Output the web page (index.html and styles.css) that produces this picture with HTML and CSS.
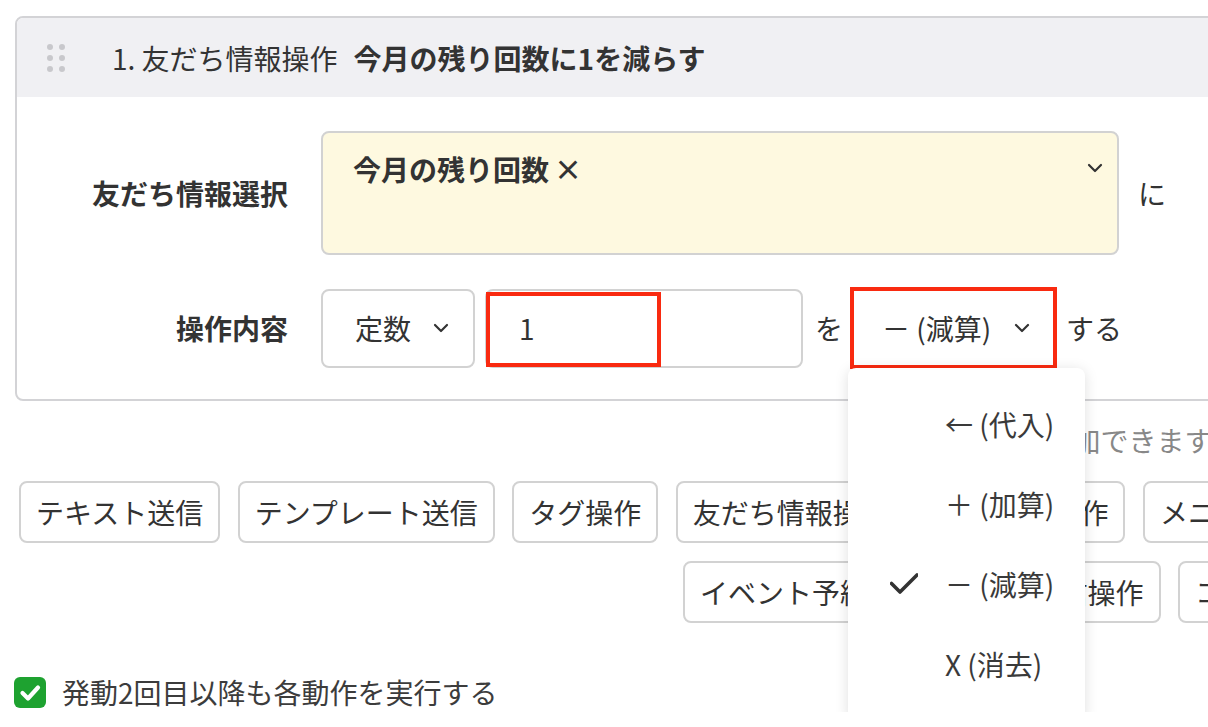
FILE: index.html
```html
<!DOCTYPE html>
<html lang="ja">
<head>
  <meta charset="UTF-8" />
  <title>アクション設定</title>
  <link rel="stylesheet" href="styles.css">
</head>
<body>
  <div class="page">
    <!-- Action card -->
    <section class="action-card">
      <div class="card-head">
        <span class="drag-handle"><i></i><i></i><i></i><i></i><i></i><i></i></span>
        <span class="head-index">1. 友だち情報操作</span>
        <span class="head-title">今月の残り回数に1を減らす</span>
      </div>

      <div class="card-body">
        <div class="form-row">
          <div class="form-label">友だち情報選択</div>
          <div class="tag-select">
            <span class="tag">今月の残り回数<span class="tag-remove">×</span></span>
            <svg class="chevron chevron-tag" width="16" height="10" viewBox="0 0 16 10"><path d="M2 2 L8 8 L14 2" /></svg>
          </div>
          <span class="suffix suffix-ni">に</span>
        </div>

        <div class="form-row">
          <div class="form-label">操作内容</div>
          <div class="select select-type">
            <span>定数</span>
            <svg class="chevron" width="16" height="10" viewBox="0 0 16 10"><path d="M2 2 L8 8 L14 2" /></svg>
          </div>
          <div class="value-input">
            <span>1</span>
            <span class="mark"></span>
          </div>
          <span class="suffix suffix-wo">を</span>
          <div class="select select-op">
            <span>－ (減算)</span>
            <svg class="chevron" width="16" height="10" viewBox="0 0 16 10"><path d="M2 2 L8 8 L14 2" /></svg>

            <!-- open menu -->
            <ul class="op-menu">
              <li><span class="op-check"></span>← (代入)</li>
              <li><span class="op-check"></span>＋ (加算)</li>
              <li class="selected">
                <span class="op-check">
                  <svg width="28" height="22" viewBox="0 0 28 22"><path d="M1.5 10.5 L10 19 L27 2" /></svg>
                </span>－ (減算)
              </li>
              <li><span class="op-check"></span>X (消去)</li>
            </ul>
          </div>
          <span class="suffix suffix-suru">する</span>
        </div>
      </div>
    </section>

    <p class="hint">アクションを追加できます</p>

    <div class="btn-row">
      <button class="btn">テキスト送信</button>
      <button class="btn">テンプレート送信</button>
      <button class="btn">タグ操作</button>
      <button class="btn">友だち情報操作</button>
      <button class="btn">シナリオ操作</button>
      <button class="btn">メニュー操作</button>
    </div>
    <div class="btn-row second">
      <button class="btn">イベント予約</button>
      <button class="btn">ステップ配信操作</button>
      <button class="btn">コンバージョン</button>
    </div>

    <label class="repeat-check">
      <span class="checkbox">
        <svg width="32" height="31" viewBox="0 0 32 31"><path d="M8.5 16 L14 21.5 L24 10.5" /></svg>
      </span>
      発動2回目以降も各動作を実行する
    </label>
  </div>
</body>
</html>
```

FILE: styles.css
```css
* {
  box-sizing: border-box;
}
html, body {
  margin: 0;
  padding: 0;
  overflow: hidden;
  background: #fff;
}
body {
  font-family: "Noto Sans CJK JP", "Noto Sans", sans-serif;
  font-size: 28px;
  color: #333;
}
.page {
  width: 1400px;
  padding: 16px 0 0 15px;
}

/* ---------- card ---------- */
.action-card {
  width: 1260px;
  border: 2px solid #d3d3d6;
  border-radius: 8px;
}
.card-head {
  display: flex;
  align-items: center;
  height: 79px;
  padding-left: 30px;
  background: #f0f0f3;
  border-radius: 6px 6px 0 0;
  white-space: nowrap;
}
.drag-handle {
  display: grid;
  grid-template-columns: 6px 6px;
  gap: 5px 6px;
  margin-right: 47px;
}
.drag-handle i {
  display: block;
  width: 6px;
  height: 6px;
  border-radius: 50%;
  background: #c8c8cc;
}
.head-title {
  font-weight: bold;
  margin-left: 16px;
}

.card-body {
  padding: 34px 0 30px;
}
.form-row {
  display: flex;
  align-items: center;
  white-space: nowrap;
}
.form-row + .form-row {
  margin-top: 32px;
}
.form-label {
  flex: 0 0 271px;
  margin-right: 33px;
  text-align: right;
  font-weight: bold;
}

.chevron {
  flex: none;
  fill: none;
  stroke: #333;
  stroke-width: 2.2;
  stroke-linecap: round;
  stroke-linejoin: round;
}

/* yellow multi select */
.tag-select {
  display: flex;
  justify-content: space-between;
  align-items: flex-start;
  width: 798px;
  height: 124px;
  padding: 18px 14px 0 30px;
  background: #fef9e0;
  border: 2px solid #d2d2d2;
  border-radius: 8px;
}
.tag {
  font-weight: bold;
  line-height: 36px;
}
.tag-remove {
  margin-left: 5px;
}
.chevron-tag {
  margin-top: 12px;
}

.suffix-ni { margin-left: 19px; }
.suffix-wo { margin-left: 12px; }
.suffix-suru { margin-left: 9px; }

/* second row controls */
.select {
  display: flex;
  align-items: center;
  justify-content: space-between;
  height: 79px;
  border: 2px solid #d2d2d2;
  border-radius: 8px;
  background: #fff;
}
.select-type {
  width: 154px;
  padding: 0 24px 0 32px;
}
.value-input {
  position: relative;
  display: flex;
  align-items: center;
  width: 318px;
  height: 79px;
  margin-left: 10px;
  padding-left: 32px;
  border: 2px solid #d2d2d2;
  border-radius: 8px;
}
/* red annotation boxes */
.value-input .mark {
  position: absolute;
  left: -1px;
  top: 1px;
  width: 175px;
  height: 75px;
  border: 4px solid #f92a10;
}
.select-op {
  position: relative;
  width: 207px;
  height: 82px;
  margin-left: 7px;
  padding: 0 23px 0 28px;
  border: 4px solid #f92a10;
  border-radius: 0;
}

/* dropdown menu */
.op-menu {
  position: absolute;
  left: -6px;
  top: 77px;
  z-index: 5;
  width: 237px;
  margin: 0;
  padding: 16px 0 16px;
  list-style: none;
  background: #fff;
  border-radius: 8px;
  box-shadow: 0 2px 14px rgba(0, 0, 0, 0.13);
  color: #3a3a3a;
}
.op-menu li {
  display: flex;
  align-items: center;
  height: 80px;
  padding-left: 42px;
}
.op-check {
  display: flex;
  width: 28px;
  margin-right: 27px;
}
.op-check svg {
  fill: none;
  stroke: #333;
  stroke-width: 3.6;
  stroke-linecap: round;
  stroke-linejoin: round;
}

/* ---------- below the card ---------- */
.hint {
  margin: 19px 0 0;
  padding-left: 863px;
  line-height: 40px;
  color: #888;
  white-space: nowrap;
}
.btn-row {
  display: flex;
  gap: 17.5px;
  margin-top: 21px;
  padding-left: 4px;
}
.btn-row.second {
  margin-top: 18px;
  padding-left: 668px;
}
.btn {
  flex: none;
  height: 62px;
  padding: 0 15px;
  border: 2px solid #d2d2d2;
  border-radius: 8px;
  background: #fff;
  font: inherit;
  line-height: 56px;
  color: #333;
  white-space: nowrap;
}

.repeat-check {
  display: flex;
  align-items: center;
  margin: 49px 0 0 -1px;
  line-height: 40px;
  color: #3c3c3c;
  white-space: nowrap;
}
.checkbox {
  display: flex;
  width: 32px;
  height: 31px;
  margin-right: 16px;
  border-radius: 6px;
  background: #1ea230;
}
.checkbox svg {
  fill: none;
  stroke: #fff;
  stroke-width: 4.2;
  stroke-linecap: round;
  stroke-linejoin: round;
}
```
